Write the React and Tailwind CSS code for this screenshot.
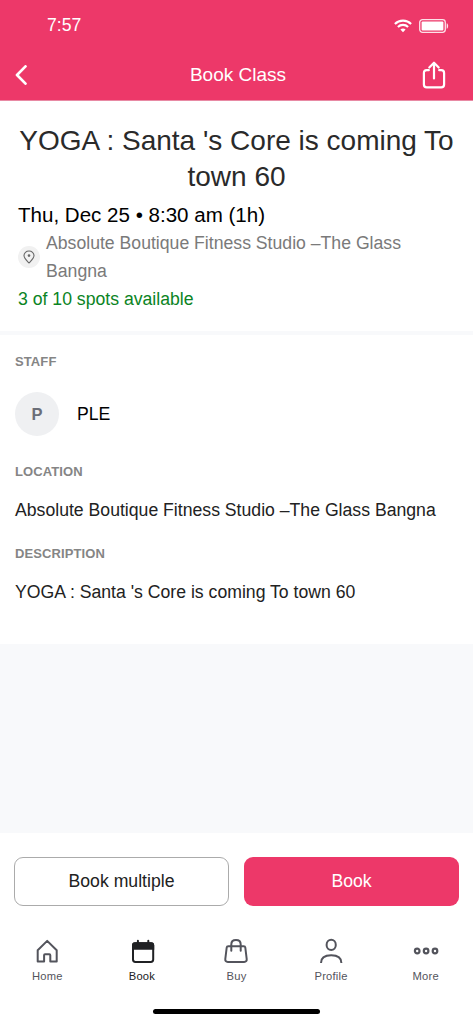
import { clsx } from 'clsx';

// ─── Icons ────────────────────────────────────────────────────────────────────

function WifiIcon() {
  return (
    <svg width="18" height="14" viewBox="0 0 18 14" fill="none" stroke="white" strokeWidth="2.1">
      <path d="M0.9 4.9C5.3 0.5 12.7 0.5 17.1 4.9" />
      <path d="M3.9 7.9C6.7 5.2 11.3 5.2 14.1 7.9" />
      <path d="M9 9.4c-1.1 0-1.9.4-2.6 1L9 13.2l2.6-2.8c-.7-.6-1.5-1-2.6-1z" fill="white" stroke="none" />
    </svg>
  );
}

function BatteryIcon() {
  return (
    <svg width="30" height="14" viewBox="0 0 30 14" fill="none">
      <rect x="0.7" y="0.7" width="25.6" height="12.6" rx="2.8" stroke="white" strokeOpacity="0.85" strokeWidth="1.3" />
      <rect x="2.6" y="2.6" width="21.8" height="8.8" rx="1" fill="white" />
      <path d="M27.7 4.2c1.9.5 1.9 5.1 0 5.6z" fill="white" fillOpacity="0.85" />
    </svg>
  );
}

function BackIcon() {
  return (
    <svg width="12" height="20" viewBox="0 0 12 20" fill="none" stroke="white" strokeWidth="2.7" strokeLinecap="round" strokeLinejoin="round">
      <path d="M10.5 1.4L2 10l8.500 8.600" />
    </svg>
  );
}

function ShareIcon() {
  return (
    <svg width="24" height="28" viewBox="0 0 24 28" fill="none" stroke="white" strokeWidth="2.2" strokeLinecap="round" strokeLinejoin="round">
      <path d="M6.800 9.200H4.700C2.700 9.200 1.900 10 1.900 12v11.600c0 2 .8 2.800 2.800 2.800h14.600c2 0 2.800-.8 2.800-2.800V12c0-2-.8-2.800-2.800-2.800h-2.100" />
      <path d="M12 17.500V2M7.300 6.500L12 1.700l4.700 4.800" />
    </svg>
  );
}

function PinIcon() {
  return (
    <svg width="12" height="14" viewBox="0 0 12 14" fill="none">
      <path d="M6 13C4.300 11.100 1 8.400 1 5.600 1 2.900 3.200 1 6 1s5 1.900 5 4.600C11 8.400 7.700 11.100 6 13z" stroke="#666" strokeWidth="1.100" />
      <circle cx="6" cy="5.600" r="1.300" fill="#666" />
    </svg>
  );
}

function HomeIcon() {
  return (
    <svg width="26" height="26" viewBox="0 0 26 26" fill="none" stroke="currentColor" strokeWidth="2" strokeLinejoin="round">
      <path d="M3.700 12.300L13.200 2.900l9.500 9.400v11.200h-6.400v-6.300c0-.6-.3-.9-.9-.9H11c-.6 0-.9.3-.9.9v6.300H3.700z" />
    </svg>
  );
}

function CalendarIcon() {
  return (
    <svg width="26" height="26" viewBox="0 0 26 26" fill="none">
      <rect x="4" y="5.200" width="20.200" height="18.800" rx="2.400" stroke="currentColor" strokeWidth="2" />
      <path d="M3 11.800V7.200c0-1.900 1-2.900 2.900-2.900h16.400c1.900 0 2.900 1 2.900 2.900v4.600z" fill="currentColor" />
      <path d="M8.900 2.700v3M19.300 2.700v3" stroke="currentColor" strokeWidth="2" strokeLinecap="round" />
    </svg>
  );
}

function BagIcon() {
  return (
    <svg width="26" height="26" viewBox="0 0 26 26" fill="none" stroke="currentColor" strokeWidth="2" strokeLinejoin="round" strokeLinecap="round">
      <path d="M5.300 8.200h15.400c1 0 1.500.4 1.600 1.300l1.400 11.500c.2 1.900-.7 2.900-2.500 2.900H4.800c-1.800 0-2.700-1-2.500-2.900L3.700 9.500c.1-.9.600-1.300 1.600-1.300z" />
      <path d="M8.300 12.700V6.400c0-2.600 1.900-4.400 4.700-4.400s4.700 1.800 4.700 4.400v6.300" />
    </svg>
  );
}

function ProfileIcon() {
  return (
    <svg width="26" height="26" viewBox="0 0 26 26" fill="none" stroke="currentColor" strokeWidth="2">
      <ellipse cx="13.200" cy="6.900" rx="4.600" ry="5.100" />
      <path d="M3 25c0-5 3.800-7.700 10.200-7.700S23.400 20 23.400 25" />
    </svg>
  );
}

function MoreIcon() {
  return (
    <svg width="26" height="26" viewBox="0 0 26 26" fill="none" stroke="currentColor" strokeWidth="2.200">
      <circle cx="4.200" cy="13" r="2.300" />
      <circle cx="13.100" cy="13" r="2.300" />
      <circle cx="22" cy="13" r="2.300" />
    </svg>
  );
}

const tabs = [
  { label: 'Home', Icon: HomeIcon },
  { label: 'Book', Icon: CalendarIcon, active: true },
  { label: 'Buy', Icon: BagIcon },
  { label: 'Profile', Icon: ProfileIcon },
  { label: 'More', Icon: MoreIcon },
];

// ─── Header ───────────────────────────────────────────────────────────────────

function Header() {
  return (
    <header className="h-[101px] bg-[#ed3869] text-white border-b border-[#e88aa4]">
      <div className="h-[50px] flex items-center justify-between pl-[47px] pr-[24px]">
        <span className="text-[17.6px] leading-5">7:57</span>
        <div className="flex items-center gap-[7px] pt-[2px]">
          <WifiIcon />
          <BatteryIcon />
        </div>
      </div>
      <div className="h-[50px] grid grid-cols-[1fr_auto_1fr] items-center pl-[15px] pr-[27px]">
        <button aria-label="Back" className="justify-self-start"><BackIcon /></button>
        <h1 className="text-[19px] leading-6 pl-[15px]">Book Class</h1>
        <button aria-label="Share" className="justify-self-end"><ShareIcon /></button>
      </div>
    </header>
  );
}

function SectionLabel({ children }) {
  return <h3 className="text-[13px] leading-4 tracking-[0.1px] font-bold text-[#858585]">{children}</h3>;
}

// ─── Tab bar ──────────────────────────────────────────────────────────────────

function TabBar() {
  return (
    <nav className="grid grid-cols-5 mt-[32px]">
      {tabs.map(({ label, Icon, active }) => (
        <button
          key={label}
          className={clsx('flex flex-col items-center', active ? 'text-[#202124]' : 'text-[#53545c]')}
        >
          <Icon />
          <span className="text-[11.2px] leading-4 tracking-[0.2px] mt-[4px]">{label}</span>
        </button>
      ))}
    </nav>
  );
}

// ─── Page ─────────────────────────────────────────────────────────────────────

export default function App() {
  return (
    <div className="w-[473px] h-[1024px] flex flex-col overflow-hidden bg-[#f8f9fb] text-[17.65px] font-['Liberation_Sans',Arial,sans-serif]">
      <Header />

      <section className="h-[230px] bg-white pt-[22px]">
        <h2 className="text-[28px] leading-9 text-[#2a2a2a] text-center px-3">
          YOGA : Santa 's Core is coming To town 60
        </h2>
        <div className="px-[18px] pt-[6px] leading-7">
          <p className="text-[20.55px] text-black">Thu, Dec 25 • 8:30 am (1h)</p>
          <div className="flex items-center gap-[6px] text-[#7a7a7a]">
            <span className="w-[22px] h-[22px] shrink-0 rounded-full bg-[#f1f1f1] flex items-center justify-center">
              <PinIcon />
            </span>
            <p className="w-[380px]">Absolute Boutique Fitness Studio –The Glass Bangna</p>
          </div>
          <p className="text-[#0b8424]">3 of 10 spots available</p>
        </div>
      </section>

      <section className="h-[309px] bg-white mt-[4px] px-[15px] pt-[19px] text-[#222]">
        <SectionLabel>STAFF</SectionLabel>
        <div className="flex items-center gap-[18px] mt-[22px] mb-[28px]">
          <span className="w-11 h-11 rounded-full bg-[#eff0f2] text-[#6b6e78] text-[16.5px] font-bold flex items-center justify-center">
            P
          </span>
          <span className="text-black">PLE</span>
        </div>
        <SectionLabel>LOCATION</SectionLabel>
        <p className="leading-6 mt-[18px] mb-[24px]">Absolute Boutique Fitness Studio –The Glass Bangna</p>
        <SectionLabel>DESCRIPTION</SectionLabel>
        <p className="leading-6 mt-[18px]">YOGA : Santa 's Core is coming To town 60</p>
      </section>

      <footer className="mt-auto h-[191px] bg-white flex flex-col pt-[24px]">
        <div className="grid grid-cols-2 gap-[15px] px-[14px]">
          <button className="h-[49px] rounded-[9px] border border-[#ababab] text-[#222]">Book multiple</button>
          <button className="h-[49px] rounded-[9px] bg-[#ed3869] text-white">Book</button>
        </div>
        <TabBar />
        <div className="w-[167px] h-[5px] rounded-full bg-black mx-auto mt-auto mb-[10px]" />
      </footer>
    </div>
  );
}
